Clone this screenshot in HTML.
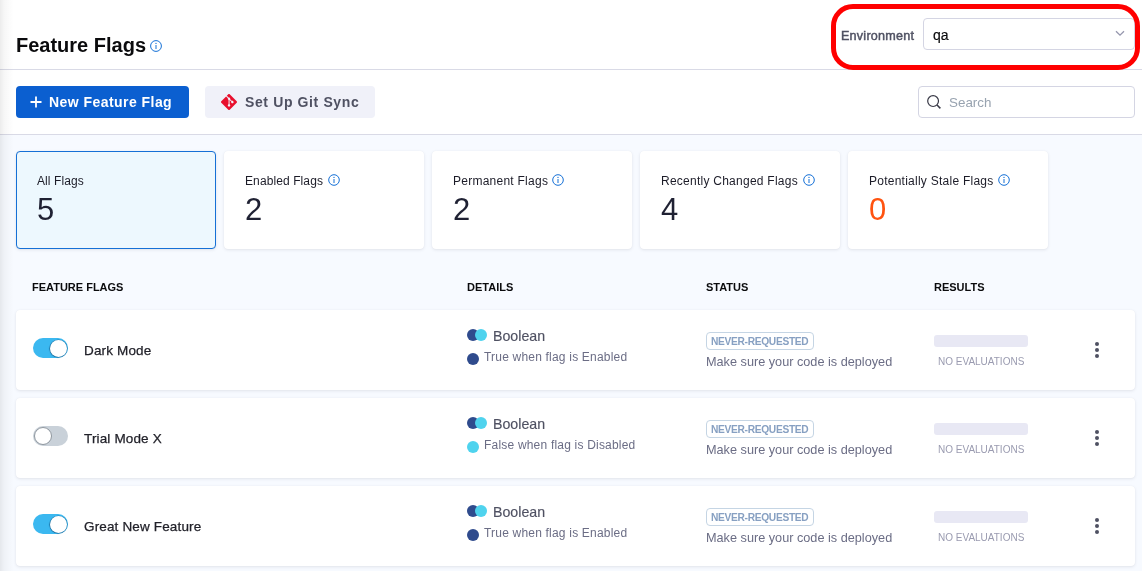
<!DOCTYPE html>
<html><head><meta charset="utf-8">
<style>
*{box-sizing:border-box;margin:0;padding:0}
html,body{width:1142px;height:571px;overflow:hidden;background:#fff}
body{position:relative;font-family:"Liberation Sans",sans-serif;color:#22222a}
.a{position:absolute}
.t{position:absolute;white-space:nowrap;line-height:1;will-change:transform}
.b{font-weight:bold}
.info{position:absolute;width:12px;height:12px}
.card{position:absolute;top:151px;width:200px;height:98px;background:#fff;border-radius:4px;box-shadow:0 0 1px rgba(40,41,61,.06),0 1px 3px rgba(96,97,112,.14)}
.row{position:absolute;left:16px;width:1119px;height:80px;background:#fff;border-radius:4px;box-shadow:0 0 1px rgba(40,41,61,.06),0 1px 3px rgba(96,97,112,.14)}
</style></head>
<body>
<!-- header -->
<div class="t b" style="left:16px;top:34.6px;font-size:20px;color:#0b0b0d">Feature Flags</div>
<svg class="info" style="left:150px;top:40px" viewBox="0 0 12 12"><circle cx="6" cy="6" r="5.4" fill="none" stroke="#1570d6" stroke-width="1"/><rect x="5.5" y="5" width="1" height="4" fill="#1570d6"/><circle cx="6" cy="3.4" r=".65" fill="#1570d6"/></svg>

<div class="t" style="left:841.3px;top:29.8px;font-size:12.6px;color:#4f5162;-webkit-text-stroke:.45px #4f5162;letter-spacing:.22px">Environment</div>
<div class="a" style="left:923px;top:18px;width:212px;height:32px;border:1px solid #d4d5e3;border-radius:4px"></div>
<div class="t" style="left:933px;top:28.2px;font-size:14px;color:#0b0b0d;-webkit-text-stroke:.2px #0b0b0d">qa</div>
<svg class="a" style="left:1115px;top:29.5px" width="10" height="7" viewBox="0 0 10 7"><path d="M1 1.2 L5 5.2 L9 1.2" fill="none" stroke="#9596ad" stroke-width="1.3"/></svg>
<div class="a" style="left:831px;top:4px;width:309px;height:66px;border:5px solid #ff0000;border-radius:22px;z-index:5"></div>

<div class="a" style="left:0;top:69px;width:1142px;height:1px;background:#d9dae6"></div>

<!-- toolbar -->
<div class="a" style="left:16px;top:86px;width:173px;height:32px;background:#0b5fd0;border-radius:4px"></div>
<svg class="a" style="left:30px;top:96px" width="12" height="12" viewBox="0 0 12 12"><path d="M6 0.5V11.5M0.5 6H11.5" stroke="#fff" stroke-width="1.8"/></svg>
<div class="t b" style="left:49px;top:95.3px;font-size:14px;color:#fff;letter-spacing:.45px">New Feature Flag</div>

<div class="a" style="left:205px;top:86px;width:170px;height:32px;background:#f0f1f9;border-radius:4px"></div>
<svg class="a" style="left:221px;top:94px" width="16" height="16" viewBox="0 0 24 24"><path fill="#e8102e" d="M23.546 10.93L13.067.452c-.604-.603-1.582-.603-2.188 0L8.708 2.627l2.76 2.76c.645-.215 1.379-.07 1.889.441.516.515.658 1.258.438 1.9l2.658 2.66c.645-.223 1.387-.078 1.9.435.721.72.721 1.884 0 2.604-.719.719-1.881.719-2.6 0-.539-.541-.674-1.337-.404-1.996L12.86 8.955v6.525c.176.086.342.203.488.348.713.721.713 1.883 0 2.6-.719.721-1.889.721-2.609 0-.719-.719-.719-1.879 0-2.598.182-.18.387-.316.605-.406V8.835c-.217-.091-.424-.222-.6-.401-.545-.545-.676-1.342-.396-2.009L7.636 3.7.45 10.881c-.6.605-.6 1.584 0 2.189l10.48 10.477c.604.604 1.582.604 2.186 0l10.43-10.43c.605-.603.605-1.582 0-2.187"/></svg>
<div class="t b" style="left:245px;top:95.3px;font-size:14px;color:#4f5162;letter-spacing:.62px">Set Up Git Sync</div>

<div class="a" style="left:918px;top:86px;width:217px;height:32px;border:1px solid #d4d5e3;border-radius:4px"></div>
<svg class="a" style="left:926px;top:94px" width="16" height="16" viewBox="0 0 16 16"><circle cx="7.1" cy="7.1" r="5.4" fill="none" stroke="#383946" stroke-width="1.2"/><path d="M11 11 L14.4 14.4" stroke="#383946" stroke-width="1.5"/></svg>
<div class="t" style="left:949.2px;top:95.6px;font-size:13.4px;color:#98a3b0">Search</div>

<div class="a" style="left:0;top:134px;width:1142px;height:1px;background:#d9dae6"></div>
<div class="a" style="left:0;top:135px;width:1142px;height:436px;background:#f7faff"></div>

<!-- cards -->
<div class="card" style="left:16px;background:#edf8fe;border:1px solid #1570d6"></div>
<div class="card" style="left:224px"></div>
<div class="card" style="left:432px"></div>
<div class="card" style="left:640px"></div>
<div class="card" style="left:848px"></div>

<div class="t" style="left:37px;top:174.8px;font-size:12px;letter-spacing:.1px;color:#1c1c28">All Flags</div>
<div class="t" style="left:37px;top:194px;font-size:31px;color:#1f2133">5</div>

<div class="t" style="left:245px;top:174.8px;font-size:12px;letter-spacing:.1px;color:#1c1c28">Enabled Flags</div>
<svg class="info" style="left:328px;top:174px" viewBox="0 0 12 12"><circle cx="6" cy="6" r="5.3" fill="none" stroke="#1570d6" stroke-width="1"/><rect x="5.5" y="5" width="1" height="4" fill="#1570d6"/><circle cx="6" cy="3.4" r=".65" fill="#1570d6"/></svg>
<div class="t" style="left:245px;top:194px;font-size:31px;color:#1f2133">2</div>

<div class="t" style="left:453px;top:174.8px;font-size:12px;letter-spacing:.25px;color:#1c1c28">Permanent Flags</div>
<svg class="info" style="left:552px;top:174px" viewBox="0 0 12 12"><circle cx="6" cy="6" r="5.3" fill="none" stroke="#1570d6" stroke-width="1"/><rect x="5.5" y="5" width="1" height="4" fill="#1570d6"/><circle cx="6" cy="3.4" r=".65" fill="#1570d6"/></svg>
<div class="t" style="left:453px;top:194px;font-size:31px;color:#1f2133">2</div>

<div class="t" style="left:661px;top:174.8px;font-size:12px;letter-spacing:.25px;color:#1c1c28">Recently Changed Flags</div>
<svg class="info" style="left:803px;top:174px" viewBox="0 0 12 12"><circle cx="6" cy="6" r="5.3" fill="none" stroke="#1570d6" stroke-width="1"/><rect x="5.5" y="5" width="1" height="4" fill="#1570d6"/><circle cx="6" cy="3.4" r=".65" fill="#1570d6"/></svg>
<div class="t" style="left:661px;top:194px;font-size:31px;color:#1f2133">4</div>

<div class="t" style="left:869px;top:174.8px;font-size:12px;letter-spacing:.25px;color:#1c1c28">Potentially Stale Flags</div>
<svg class="info" style="left:998px;top:174px" viewBox="0 0 12 12"><circle cx="6" cy="6" r="5.3" fill="none" stroke="#1570d6" stroke-width="1"/><rect x="5.5" y="5" width="1" height="4" fill="#1570d6"/><circle cx="6" cy="3.4" r=".65" fill="#1570d6"/></svg>
<div class="t" style="left:869px;top:194px;font-size:31px;color:#ff5310">0</div>

<!-- table header -->
<div class="t b" style="left:32px;top:281.7px;font-size:11px;color:#0b0b0d">FEATURE FLAGS</div>
<div class="t b" style="left:467px;top:281.7px;font-size:11px;color:#0b0b0d">DETAILS</div>
<div class="t b" style="left:706px;top:281.7px;font-size:11px;color:#0b0b0d">STATUS</div>
<div class="t b" style="left:934px;top:281.7px;font-size:11px;color:#0b0b0d">RESULTS</div>

<div class="row" style="top:310px">
<div class="a" style="left:17px;top:28px;width:35px;height:20px;border-radius:10px;background:#3bb8f0"></div>
<div class="a" style="left:33.5px;top:29.5px;width:17px;height:17px;border-radius:50%;background:#fff;box-shadow:0 0 0 .6px rgba(20,100,150,.6),-0.5px 0.5px 1px rgba(0,40,80,.5)"></div>
<div class="t" style="left:68px;top:33.9px;font-size:13.5px;color:#22222a;letter-spacing:.15px;-webkit-text-stroke:.25px #22222a">Dark Mode</div>
<div class="a" style="left:451px;top:19px;width:12px;height:12px;border-radius:50%;background:#2f4b8d"></div>
<div class="a" style="left:459px;top:19px;width:12px;height:12px;border-radius:50%;background:#4fd3ee"></div>
<div class="t" style="left:477.3px;top:18.9px;font-size:14.2px;color:#4f5162;-webkit-text-stroke:.15px #4f5162">Boolean</div>
<div class="a" style="left:451px;top:43px;width:12px;height:12px;border-radius:50%;background:#2f4b8d"></div>
<div class="t" style="left:467.5px;top:40.5px;font-size:12px;color:#6b6d85;letter-spacing:.2px">True when flag is Enabled</div>
<div class="a" style="left:690px;top:22px;width:108px;height:18px;border:1px solid #c5d5e4;border-radius:4px"></div>
<div class="t b" style="left:695px;top:27px;font-size:10.2px;color:#87a0c2;letter-spacing:-.3px">NEVER-REQUESTED</div>
<div class="t" style="left:690px;top:45.5px;font-size:12.7px;color:#6b6d85">Make sure your code is deployed</div>
<div class="a" style="left:918px;top:25px;width:94px;height:12px;border-radius:3px;background:#e8e8f4"></div>
<div class="t" style="left:922px;top:46.5px;font-size:10px;color:#9a9bb0">NO EVALUATIONS</div>
<div class="a" style="left:1079px;top:32px;width:4px;height:4px;border-radius:50%;background:#4f5162"></div>
<div class="a" style="left:1079px;top:38px;width:4px;height:4px;border-radius:50%;background:#4f5162"></div>
<div class="a" style="left:1079px;top:44px;width:4px;height:4px;border-radius:50%;background:#4f5162"></div>
</div>
<div class="row" style="top:398px">
<div class="a" style="left:17px;top:28px;width:35px;height:20px;border-radius:10px;background:#c9d1d9"></div>
<div class="a" style="left:18px;top:29px;width:18px;height:18px;border-radius:50%;background:#fff;border:1px solid #8f979f"></div>
<div class="t" style="left:68px;top:33.9px;font-size:13.5px;color:#22222a;letter-spacing:.15px;-webkit-text-stroke:.25px #22222a">Trial Mode X</div>
<div class="a" style="left:451px;top:19px;width:12px;height:12px;border-radius:50%;background:#2f4b8d"></div>
<div class="a" style="left:459px;top:19px;width:12px;height:12px;border-radius:50%;background:#4fd3ee"></div>
<div class="t" style="left:477.3px;top:18.9px;font-size:14.2px;color:#4f5162;-webkit-text-stroke:.15px #4f5162">Boolean</div>
<div class="a" style="left:451px;top:43px;width:12px;height:12px;border-radius:50%;background:#4fd3ee"></div>
<div class="t" style="left:467.5px;top:40.5px;font-size:12px;color:#6b6d85;letter-spacing:.2px">False when flag is Disabled</div>
<div class="a" style="left:690px;top:22px;width:108px;height:18px;border:1px solid #c5d5e4;border-radius:4px"></div>
<div class="t b" style="left:695px;top:27px;font-size:10.2px;color:#87a0c2;letter-spacing:-.3px">NEVER-REQUESTED</div>
<div class="t" style="left:690px;top:45.5px;font-size:12.7px;color:#6b6d85">Make sure your code is deployed</div>
<div class="a" style="left:918px;top:25px;width:94px;height:12px;border-radius:3px;background:#e8e8f4"></div>
<div class="t" style="left:922px;top:46.5px;font-size:10px;color:#9a9bb0">NO EVALUATIONS</div>
<div class="a" style="left:1079px;top:32px;width:4px;height:4px;border-radius:50%;background:#4f5162"></div>
<div class="a" style="left:1079px;top:38px;width:4px;height:4px;border-radius:50%;background:#4f5162"></div>
<div class="a" style="left:1079px;top:44px;width:4px;height:4px;border-radius:50%;background:#4f5162"></div>
</div>
<div class="row" style="top:486px">
<div class="a" style="left:17px;top:28px;width:35px;height:20px;border-radius:10px;background:#3bb8f0"></div>
<div class="a" style="left:33.5px;top:29.5px;width:17px;height:17px;border-radius:50%;background:#fff;box-shadow:0 0 0 .6px rgba(20,100,150,.6),-0.5px 0.5px 1px rgba(0,40,80,.5)"></div>
<div class="t" style="left:68px;top:33.9px;font-size:13.5px;color:#22222a;letter-spacing:.15px;-webkit-text-stroke:.25px #22222a">Great New Feature</div>
<div class="a" style="left:451px;top:19px;width:12px;height:12px;border-radius:50%;background:#2f4b8d"></div>
<div class="a" style="left:459px;top:19px;width:12px;height:12px;border-radius:50%;background:#4fd3ee"></div>
<div class="t" style="left:477.3px;top:18.9px;font-size:14.2px;color:#4f5162;-webkit-text-stroke:.15px #4f5162">Boolean</div>
<div class="a" style="left:451px;top:43px;width:12px;height:12px;border-radius:50%;background:#2f4b8d"></div>
<div class="t" style="left:467.5px;top:40.5px;font-size:12px;color:#6b6d85;letter-spacing:.2px">True when flag is Enabled</div>
<div class="a" style="left:690px;top:22px;width:108px;height:18px;border:1px solid #c5d5e4;border-radius:4px"></div>
<div class="t b" style="left:695px;top:27px;font-size:10.2px;color:#87a0c2;letter-spacing:-.3px">NEVER-REQUESTED</div>
<div class="t" style="left:690px;top:45.5px;font-size:12.7px;color:#6b6d85">Make sure your code is deployed</div>
<div class="a" style="left:918px;top:25px;width:94px;height:12px;border-radius:3px;background:#e8e8f4"></div>
<div class="t" style="left:922px;top:46.5px;font-size:10px;color:#9a9bb0">NO EVALUATIONS</div>
<div class="a" style="left:1079px;top:32px;width:4px;height:4px;border-radius:50%;background:#4f5162"></div>
<div class="a" style="left:1079px;top:38px;width:4px;height:4px;border-radius:50%;background:#4f5162"></div>
<div class="a" style="left:1079px;top:44px;width:4px;height:4px;border-radius:50%;background:#4f5162"></div>
</div>
<div class="a" style="left:0;top:0;width:14px;height:571px;background:linear-gradient(to right,rgba(0,0,0,.075),rgba(0,0,0,.035) 4px,rgba(0,0,0,.01) 10px,rgba(0,0,0,0))"></div>
</body></html>
